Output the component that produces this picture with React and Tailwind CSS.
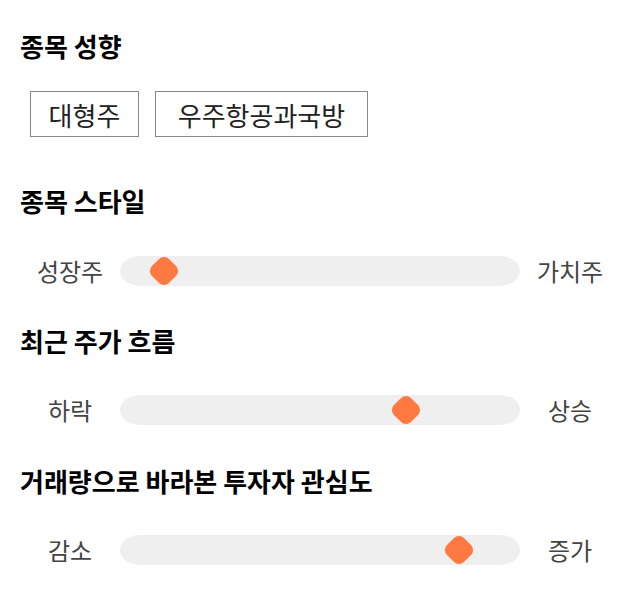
import React from "react";

const font = { fontFamily: '"Noto Sans CJK KR", "Noto Sans", sans-serif' };

function Slider({ left, right, pos }) {
  return (
    <div className="flex items-center h-[30px]">
      <div className="w-[100px] text-center text-[24px] text-[#444] leading-[30px]">{left}</div>
      <div className="relative w-[400px] h-[30px] bg-[#efefef] rounded-[20px_/_15px]">
        <div
          className="absolute top-[3px] w-[24px] h-[24px] bg-[#ff7940] rounded-[7px] rotate-45"
          style={{ left: pos - 12 }}
        />
      </div>
      <div className="w-[100px] text-center text-[24px] text-[#444] leading-[30px]">{right}</div>
    </div>
  );
}

export default function App() {
  return (
    <div className="w-[640px] h-[606px] bg-white px-5 pt-[30px]" style={font}>
      <h2 className="text-[26px] font-bold leading-8 text-black">종목 성향</h2>
      <div className="flex gap-4 ml-[10px] mt-[29px]">
        <div className="w-[109px] h-[46px] flex items-center justify-center border border-[#888] text-[26px] text-[#222]">대형주</div>
        <div className="w-[213px] h-[46px] flex items-center justify-center border border-[#888] text-[26px] text-[#222]">우주항공과국방</div>
      </div>
      <h2 className="text-[26px] font-bold leading-8 text-black mt-[48px]">종목 스타일</h2>
      <div className="mt-[39px]">
        <Slider left="성장주" right="가치주" pos={44} />
      </div>
      <h2 className="text-[26px] font-bold leading-8 text-black mt-[39px]">최근 주가 흐름</h2>
      <div className="mt-[38px]">
        <Slider left="하락" right="상승" pos={286} />
      </div>
      <h2 className="text-[26px] font-bold leading-8 text-black mt-[40px]">거래량으로 바라본 투자자 관심도</h2>
      <div className="mt-[38px]">
        <Slider left="감소" right="증가" pos={339} />
      </div>
    </div>
  );
}
